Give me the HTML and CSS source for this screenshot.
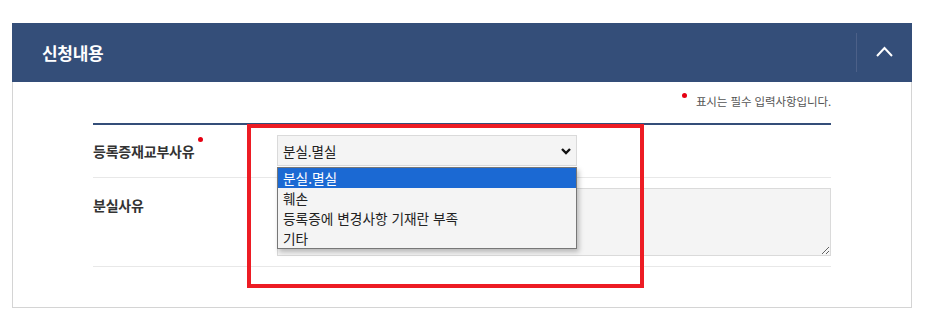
FILE: index.html
```html
<!DOCTYPE html>
<html lang="ko">
<head>
    <meta charset="UTF-8">
    <title>신청내용</title>
    <link rel="stylesheet" href="styles.css">
</head>
<body>
<div class="panel">
    <div class="panel-head">
        <h2>신청내용</h2>
        <button class="toggle" type="button" aria-label="접기">
            <svg width="17" height="11" viewBox="0 0 17 11" fill="none" stroke="#fff" stroke-width="2">
                <polyline points="1,10 8.5,2 16,10"></polyline>
            </svg>
        </button>
    </div>
    <div class="panel-body">
        <p class="note"><span class="dot"></span>표시는 필수 입력사항입니다.</p>
        <div class="form-table">
            <div class="row">
                <div class="label"><span class="req">등록증재교부사유</span></div>
                <div class="field">
                    <div class="select-wrap">
                        <select id="reason">
                            <option>분실.멸실</option>
                            <option>훼손</option>
                            <option>등록증에 변경사항 기재란 부족</option>
                            <option>기타</option>
                        </select>
                        <svg class="arrow" width="10" height="7" viewBox="0 0 10 7" fill="none" stroke="#111" stroke-width="2.4">
                            <polyline points="1,1 5,5 9,1"></polyline>
                        </svg>
                        <ul class="dropdown">
                            <li class="on">분실.멸실</li>
                            <li>훼손</li>
                            <li>등록증에 변경사항 기재란 부족</li>
                            <li>기타</li>
                        </ul>
                    </div>
                </div>
            </div>
            <div class="row">
                <div class="label label-top">분실사유</div>
                <div class="field">
                    <textarea></textarea>
                </div>
            </div>
        </div>
    </div>
    <div class="highlight"></div>
</div>
</body>
</html>
```

FILE: styles.css
```css
* {
    margin: 0;
    padding: 0;
    box-sizing: border-box;
    font-family: "Noto Sans CJK KR", "Noto Sans", sans-serif;
}

body {
    background: #fff;
    color: #333;
}

.panel {
    position: relative;
    width: 900px;
    margin: 23px 0 0 12px;
}

.panel-head {
    display: flex;
    align-items: center;
    justify-content: space-between;
    height: 59px;
    background: #344e79;
    padding-left: 30px;
}

.panel-head h2 {
    color: #fff;
    font-size: 17px;
    font-weight: 700;
    letter-spacing: -0.3px;
    margin-top: -1px;
}

.toggle {
    display: flex;
    align-items: center;
    justify-content: center;
    width: 56px;
    height: 39px;
    background: none;
    border: none;
    border-left: 1px solid #4c6088;
    padding-bottom: 2px;
    cursor: pointer;
}

.panel-body {
    border: 1px solid #d4d4d4;
    border-top: none;
    padding: 11px 80px 40px 80px;
}

.note {
    display: flex;
    justify-content: flex-end;
    font-size: 11.5px;
    line-height: 16px;
    color: #555;
    letter-spacing: -0.1px;
    margin-bottom: 14px;
}

.note .dot {
    width: 5px;
    height: 5px;
    border-radius: 50%;
    background: #e60012;
    margin: 0 9px 0 0;
    align-self: flex-start;
    margin-top: 0;
}

.form-table {
    border-top: 2px solid #344e79;
}

.row {
    display: grid;
    grid-template-columns: 184px 1fr;
    border-bottom: 1px solid #e8e8e8;
    padding: 10px 0;
}

.row:first-child {
    padding-bottom: 11px;
}

.label {
    display: flex;
    align-items: center;
    font-size: 14px;
    font-weight: 700;
    color: #333;
    letter-spacing: -0.2px;
}

.label-top {
    align-items: flex-start;
    padding-top: 7px;
}

.req {
    position: relative;
}

.req::after {
    content: '';
    position: absolute;
    top: -4px;
    right: -9px;
    width: 5px;
    height: 5px;
    border-radius: 50%;
    background: #e60012;
}

.field {
    display: flex;
}

.select-wrap {
    position: relative;
    width: 300px;
}

select {
    appearance: none;
    -webkit-appearance: none;
    width: 300px;
    height: 31px;
    border: 1px solid #dadada;
    background: #f4f4f4;
    padding: 0 5px;
    font-size: 13.5px;
    color: #222;
    outline: none;
}

.select-wrap .arrow {
    position: absolute;
    top: 13px;
    right: 6px;
}

.dropdown {
    position: absolute;
    top: 32px;
    left: 0;
    width: 300px;
    list-style: none;
    background: #f4f4f4;
    border: 1px solid #777;
    box-shadow: 2px 3px 5px rgba(0,0,0,0.25);
    z-index: 5;
}

.dropdown li {
    height: 20px;
    line-height: 20px;
    padding: 0 5px;
    font-size: 13.7px;
    color: #222;
}

.dropdown li.on {
    background: #1b69d3;
    color: #fff;
}

textarea {
    width: 554px;
    height: 68px;
    border: 1px solid #dadada;
    background: #f4f4f4;
    resize: vertical;
    outline: none;
}

.highlight {
    position: absolute;
    left: 235px;
    top: 101px;
    width: 397px;
    height: 164px;
    border: 4px solid #ed1c24;
    pointer-events: none;
    z-index: 6;
}
```
